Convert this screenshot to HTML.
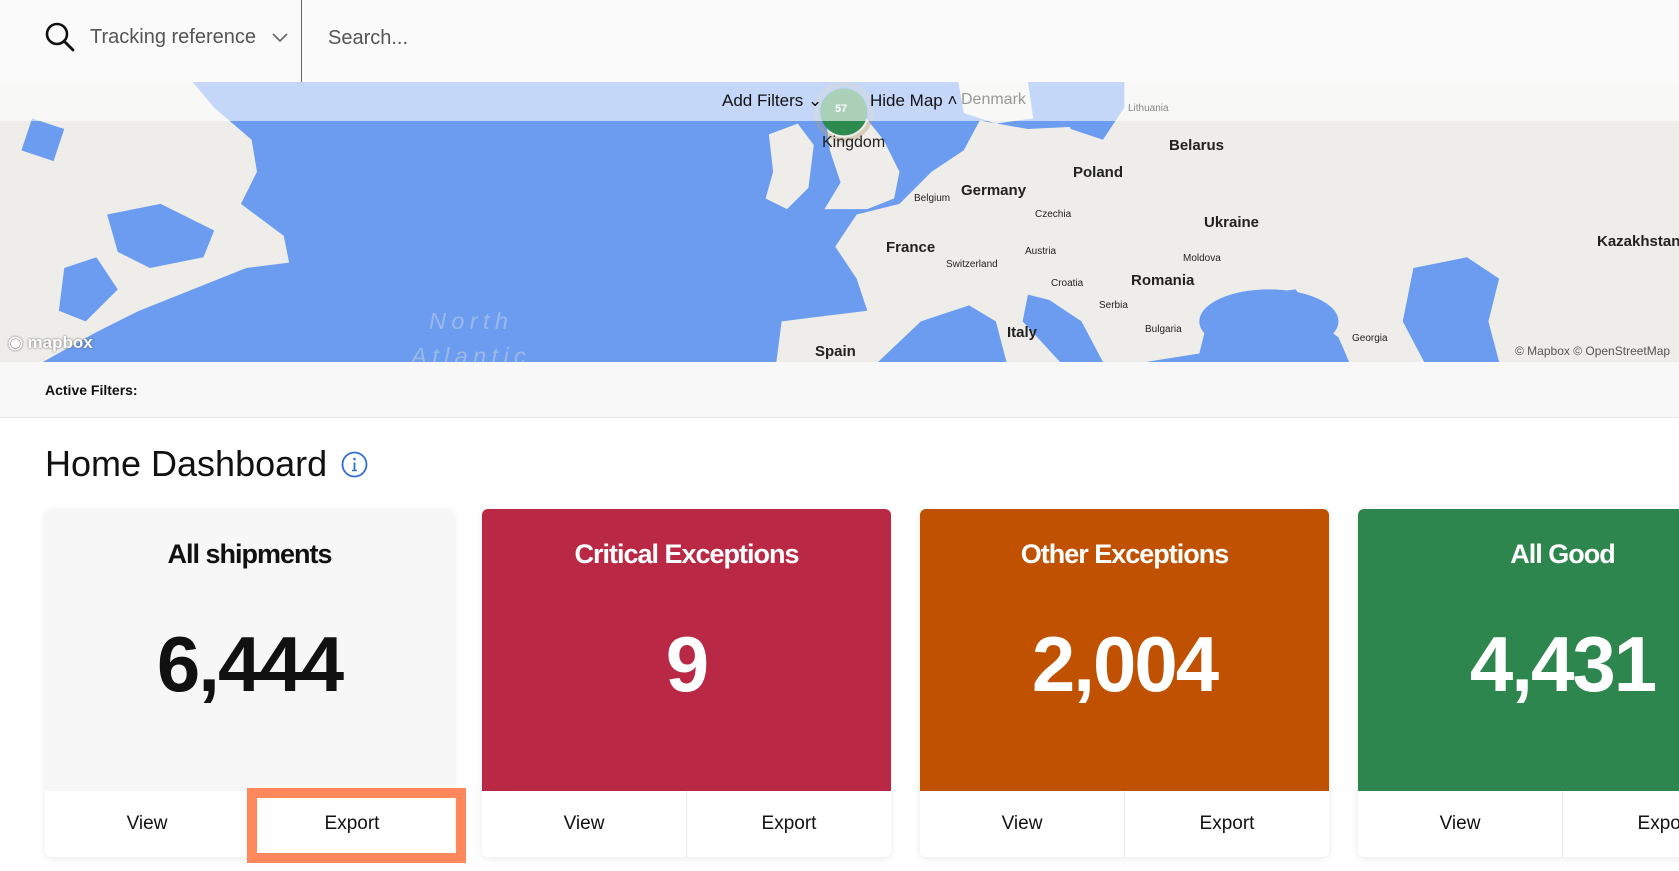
<!DOCTYPE html>
<html><head><meta charset="utf-8"><style>
*{margin:0;padding:0;box-sizing:border-box}
body{width:1679px;height:871px;overflow:hidden;background:#fff;font-family:"Liberation Sans",sans-serif;position:relative}
.hdr{position:absolute;left:0;top:0;width:1679px;height:82px;background:#fafafa}
.div{position:absolute;left:301px;top:0;width:1px;height:82px;background:#666}
.map{position:absolute;left:0;top:82px;width:1679px;height:280px;overflow:hidden;background:#6b9cf0}
.band{position:absolute;left:0;top:82px;width:1679px;height:39px;background:rgba(255,255,255,0.6)}
.af{position:absolute;left:0;top:362px;width:1679px;height:56px;background:#f8f8f8;border-bottom:1px solid #e6e6e6}
.card{position:absolute;top:509px;width:409px;height:348px;border-radius:6px;overflow:hidden;box-shadow:0 2px 8px rgba(0,0,0,0.08);background:#fff}
.card .top{height:282px;text-align:center;position:relative}
.card h3{position:absolute;top:30px;width:100%;font-size:27px;font-weight:bold;letter-spacing:-1px}
.card .n{position:absolute;top:110px;width:100%;font-size:78px;font-weight:bold;letter-spacing:-2px}
.card .ft{display:flex;height:66px}
.card .ft div{flex:1;display:flex;align-items:center;justify-content:center;font-size:19px;color:#111}
.card .ft div+div{border-left:1px solid #e6e6e6}
.lbl{position:absolute;font-size:15px;color:#222;font-weight:bold;white-space:nowrap}
.sm{font-size:10px;font-weight:normal}
</style></head><body>
<div class="hdr">
<svg style="position:absolute;left:44px;top:21px" width="32" height="32" viewBox="0 0 32 32"><circle cx="13" cy="13" r="10" fill="none" stroke="#111" stroke-width="2.6"/><line x1="20" y1="20" x2="29" y2="29" stroke="#111" stroke-width="2.8" stroke-linecap="round"/></svg>
<div style="position:absolute;left:90px;top:26px;font-size:20px;color:#555">Tracking reference</div>
<svg style="position:absolute;left:271px;top:32px" width="18" height="12" viewBox="0 0 18 12"><polyline points="2,2 9,9 16,2" fill="none" stroke="#666" stroke-width="1.6"/></svg>
<div class="div"></div>
<div style="position:absolute;left:328px;top:27px;font-size:20px;color:#555">Search...</div>
</div>
<div class="map">
<svg width="1679" height="280" viewBox="0 76 1568 262" preserveAspectRatio="none">
<rect x="0" y="76" width="1568" height="262" fill="#6b9cf0"/>
<polygon fill="#eeede9" points="0,76 180,76 200,100 235,130 240,160 225,190 265,220 270,245 230,250 180,270 130,290 90,310 40,338 0,338"/>
<polygon fill="#6b9cf0" points="100,200 150,190 200,215 190,240 140,250 110,235"/>
<polygon fill="#6b9cf0" points="30,110 60,120 50,150 20,140"/>
<polygon fill="#6b9cf0" points="60,250 90,240 110,270 80,300 55,290"/>
<polygon fill="#eeede9" points="718,125 745,115 760,135 755,175 735,195 715,185 722,160"/>
<polygon fill="#eeede9" points="770,100 805,105 825,130 840,160 835,185 810,195 770,195 785,170 775,140"/>
<polygon fill="#eeede9" points="895,76 960,76 965,110 930,115 900,105"/>
<polygon fill="#eeede9" points="1040,76 1568,76 1568,338 1400,338 1390,300 1400,260 1370,240 1320,250 1310,300 1330,338 1260,338 1250,315 1230,300 1210,270 1170,275 1130,290 1120,330 1070,338 1030,338 1010,300 980,280 960,275 955,300 990,338 940,338 930,300 905,285 860,300 820,338 725,338 730,300 770,295 810,290 800,260 780,230 800,200 840,190 870,160 900,140 915,112 960,120 1000,118 1040,110"/>
<ellipse cx="1185" cy="300" rx="65" ry="30" fill="#6b9cf0"/>
<ellipse cx="1350" cy="295" rx="28" ry="45" fill="#6b9cf0"/>
<polygon fill="#6b9cf0" points="1020,76 1050,76 1050,100 1030,130 1000,120 990,100"/>
<circle cx="788" cy="104" r="22" fill="#2e8b4f"/>
<circle cx="788" cy="104" r="26" fill="none" stroke="rgba(180,160,120,0.4)" stroke-width="4"/>
<text x="440" y="307" font-family="Liberation Sans" font-size="22" fill="#9bb8e8" letter-spacing="5" text-anchor="middle" font-style="italic">North</text>
<text x="440" y="340" font-family="Liberation Sans" font-size="22" fill="#9bb8e8" letter-spacing="5" text-anchor="middle" font-style="italic">Atlantic</text>
</svg>
</div>
<div class="band"></div>
<div style="position:absolute;left:0;top:0">
<div class="lbl" style="left:722px;top:91px;font-size:17px;font-weight:normal;color:#111">Add Filters ⌄</div>
<div class="lbl" style="left:835px;top:103px;font-size:11px;color:#fff">57</div>
<div class="lbl" style="left:870px;top:91px;font-size:17px;font-weight:normal;color:#111">Hide Map ˄</div>
<div class="lbl" style="left:961px;top:91px;font-size:16px;font-weight:normal;color:#999">Denmark</div>
<div class="lbl" style="left:1128px;top:103px;font-size:10px;font-weight:normal;color:#888">Lithuania</div>
<div class="lbl" style="left:822px;top:134px;font-weight:normal;font-size:16px">Kingdom</div>
<div class="lbl" style="left:1169px;top:137px">Belarus</div>
<div class="lbl" style="left:1073px;top:164px">Poland</div>
<div class="lbl" style="left:961px;top:182px">Germany</div>
<div class="lbl sm" style="left:914px;top:193px">Belgium</div>
<div class="lbl sm" style="left:1035px;top:209px">Czechia</div>
<div class="lbl" style="left:1204px;top:214px">Ukraine</div>
<div class="lbl" style="left:1597px;top:233px">Kazakhstan</div>
<div class="lbl" style="left:886px;top:239px">France</div>
<div class="lbl sm" style="left:1025px;top:246px">Austria</div>
<div class="lbl sm" style="left:946px;top:259px">Switzerland</div>
<div class="lbl sm" style="left:1183px;top:253px">Moldova</div>
<div class="lbl" style="left:1131px;top:272px">Romania</div>
<div class="lbl sm" style="left:1051px;top:278px">Croatia</div>
<div class="lbl sm" style="left:1099px;top:300px">Serbia</div>
<div class="lbl sm" style="left:1145px;top:324px">Bulgaria</div>
<div class="lbl sm" style="left:1352px;top:333px">Georgia</div>
<div class="lbl" style="left:1007px;top:324px">Italy</div>
<div class="lbl" style="left:815px;top:343px">Spain</div>
<div class="lbl" style="left:8px;top:333px;color:#fff;font-size:17px;text-shadow:0 0 2px #555">◉ mapbox</div>
<div class="lbl sm" style="left:1515px;top:344px;font-size:12px;color:#555">© Mapbox © OpenStreetMap</div>
</div>
<div class="af"><div style="position:absolute;left:45px;top:20px;font-size:14px;font-weight:bold;color:#111">Active Filters:</div></div>
<div style="position:absolute;left:45px;top:443px;font-size:36px;color:#111">Home Dashboard</div>
<svg style="position:absolute;left:341px;top:451px" width="27" height="27" viewBox="0 0 27 27"><circle cx="13.5" cy="13.5" r="12" fill="none" stroke="#2f6fd1" stroke-width="1.8"/><circle cx="13.5" cy="8" r="1.3" fill="#2f6fd1"/><line x1="13.5" y1="11.5" x2="13.5" y2="19" stroke="#2f6fd1" stroke-width="1.8"/><line x1="11" y1="19.5" x2="16" y2="19.5" stroke="#2f6fd1" stroke-width="1.4"/></svg>

<div class="card" style="left:45px"><div class="top" style="background:#f7f7f7;color:#111"><h3>All shipments</h3><div class="n">6,444</div></div><div class="ft"><div>View</div><div>Export</div></div></div>
<div class="card" style="left:482px"><div class="top" style="background:#b92945;color:#fff"><h3>Critical Exceptions</h3><div class="n">9</div></div><div class="ft"><div>View</div><div>Export</div></div></div>
<div class="card" style="left:920px"><div class="top" style="background:#c05100;color:#fff"><h3>Other Exceptions</h3><div class="n">2,004</div></div><div class="ft"><div>View</div><div>Export</div></div></div>
<div class="card" style="left:1358px"><div class="top" style="background:#2d864e;color:#fff"><h3>All Good</h3><div class="n">4,431</div></div><div class="ft"><div>View</div><div>Export</div></div></div>
<div style="position:absolute;left:247px;top:788px;width:219px;height:75px;border:10px solid #ff875c"></div>
</body></html>
